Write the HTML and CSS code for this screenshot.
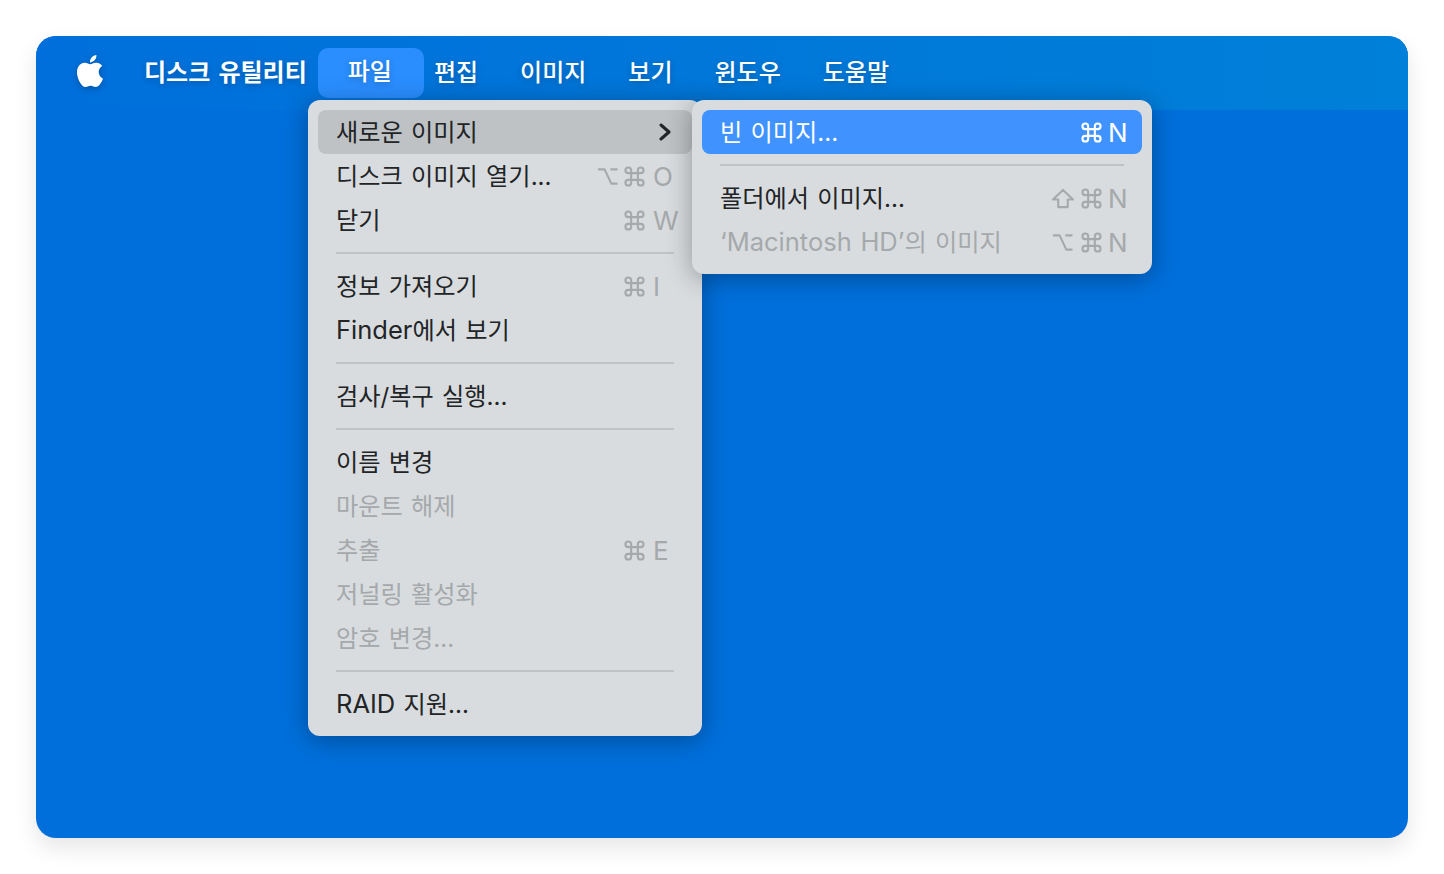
FILE: index.html
```html
<!DOCTYPE html>
<html lang="ko">
<head>
<meta charset="utf-8">
<title>디스크 유틸리티</title>
<link rel="stylesheet" href="styles.css">
</head>
<body>
<svg class="sprite" aria-hidden="true">
  <symbol id="cmd" viewBox="0 0 22 22"><path d="M7.5 7.5H14.5V14.5H7.5Z M7.5 7.5H4.5A3 3 0 1 1 7.5 4.5V17.5A3 3 0 1 1 4.5 14.5H17.5A3 3 0 1 1 14.5 17.5V4.5A3 3 0 1 1 17.5 7.5H7.5"/></symbol>
  <symbol id="opt" viewBox="0 0 22 22"><path d="M1 3.5H8L15 18.5H21.5M14 3.5H21.5"/></symbol>
  <symbol id="shift" viewBox="0 0 24 22"><path d="M12 2L22.5 12H17V20H7V12H1.5Z"/></symbol>
</svg>
<div class="window">
  <header class="menubar">
    <svg class="apple" viewBox="0 0 24 24"><path d="M12.152 6.896c-.948 0-2.415-1.078-3.96-1.04-2.04.027-3.91 1.183-4.961 3.014-2.117 3.675-.546 9.103 1.519 12.09 1.013 1.454 2.208 3.09 3.792 3.039 1.52-.065 2.09-.987 3.935-.987 1.831 0 2.35.987 3.96.948 1.637-.026 2.676-1.48 3.676-2.948 1.156-1.688 1.636-3.325 1.662-3.415-.039-.013-3.182-1.221-3.22-4.857-.026-3.04 2.48-4.494 2.597-4.559-1.429-2.09-3.623-2.324-4.39-2.376-2-.156-3.675 1.09-4.61 1.09zM15.53 3.83c.843-1.012 1.4-2.427 1.245-3.83-1.207.052-2.662.805-3.532 1.818-.78.896-1.454 2.338-1.273 3.714 1.338.104 2.715-.688 3.559-1.701"/></svg>
    <span class="app-name">디스크 유틸리티</span>
    <span class="bar-item active">파일</span>
    <span class="bar-item">편집</span>
    <span class="bar-item">이미지</span>
    <span class="bar-item">보기</span>
    <span class="bar-item">윈도우</span>
    <span class="bar-item">도움말</span>
  </header>

  <div class="menu menu-file">
    <div class="row hover"><span class="label">새로운 이미지</span>
      <svg class="chevron" viewBox="0 0 12 18"><path d="M2 2l8 7-8 7"/></svg></div>
    <div class="row"><span class="label">디스크 이미지 열기...</span><span class="keys dim"><svg class="mod"><use href="#opt"/></svg><svg class="mod"><use href="#cmd"/></svg><b>O</b></span></div>
    <div class="row"><span class="label">닫기</span><span class="keys dim"><i></i><svg class="mod"><use href="#cmd"/></svg><b>W</b></span></div>
    <hr>
    <div class="row"><span class="label">정보 가져오기</span><span class="keys dim"><i></i><svg class="mod"><use href="#cmd"/></svg><b>I</b></span></div>
    <div class="row"><span class="label"><span class="latin">Finder</span>에서 보기</span></div>
    <hr>
    <div class="row"><span class="label">검사/복구 실행...</span></div>
    <hr>
    <div class="row"><span class="label">이름 변경</span></div>
    <div class="row off"><span class="label">마운트 해제</span></div>
    <div class="row off"><span class="label">추출</span><span class="keys"><i></i><svg class="mod"><use href="#cmd"/></svg><b>E</b></span></div>
    <div class="row off"><span class="label">저널링 활성화</span></div>
    <div class="row off"><span class="label">암호 변경...</span></div>
    <hr>
    <div class="row"><span class="label"><span class="latin">RAID</span> 지원...</span></div>
  </div>

  <div class="menu menu-sub">
    <div class="row selected"><span class="label">빈 이미지...</span><span class="keys"><i></i><svg class="mod"><use href="#cmd"/></svg><b>N</b></span></div>
    <hr>
    <div class="row"><span class="label">폴더에서 이미지...</span><span class="keys dim"><svg class="mod wide"><use href="#shift"/></svg><svg class="mod"><use href="#cmd"/></svg><b>N</b></span></div>
    <div class="row off"><span class="label"><span class="latin">‘Macintosh HD’</span>의 이미지</span><span class="keys"><svg class="mod"><use href="#opt"/></svg><svg class="mod"><use href="#cmd"/></svg><b>N</b></span></div>
  </div>
</div>
</body>
</html>
```
FILE: styles.css
```css
* { box-sizing: border-box; }
html, body { margin: 0; background: #fff; }
body {
  width: 1444px;
  height: 874px;
  padding: 36px;
  overflow: hidden;
  font-family: "Inter", "Noto Sans CJK KR", sans-serif;
  font-size: 24px;
}
.sprite { display: none; }
.window {
  position: relative;
  width: 1372px;
  height: 802px;
  background: #006fdb;
  border-radius: 20px;
  box-shadow: 0 10px 22px rgba(0, 0, 0, .1);
}
.menubar {
  display: flex;
  align-items: center;
  height: 74px;
  padding: 0 0 0 38px;
  border-radius: 20px 20px 0 0;
  background: linear-gradient(90deg, #006fdb 0%, #0080d8 100%);
  color: #fff;
  text-shadow: 0 2px 6px rgba(0, 0, 0, .22);
  word-spacing: 2.5px;
}
.apple {
  width: 32px;
  height: 32px;
  margin: 0 38px 4px 0;
  fill: #fff;
  filter: drop-shadow(0 2px 3px rgba(0, 0, 0, .25));
}
.app-name { font-weight: 700; margin: 0 11px 6px 0; white-space: nowrap; }
.bar-item { margin: 0 42px 6px 0; white-space: nowrap; font-weight: 500; }
.bar-item.active {
  height: 50px;
  line-height: 48px;
  padding: 0 32px 0 30px;
  margin: 0 10px 0 0;
  border-radius: 10px;
  background: #2a8eff;
}
.menu {
  position: absolute;
  top: 64px;
  padding: 10px;
  background: #d8dcdf;
  border-radius: 12px;
  color: #222426;
  box-shadow: 0 4px 26px rgba(0, 0, 0, .32);
}
.menu-file { left: 272px; width: 394px; }
.menu-sub { left: 656px; width: 460px; }
.row {
  display: flex;
  align-items: center;
  justify-content: space-between;
  height: 44px;
  padding-left: 18px;
  border-radius: 8px;
  white-space: nowrap;
}
.label {
  margin-bottom: 4px;
  font-size: 24.2px;
  word-spacing: 1.5px;
}
.latin { font-size: 25.5px; }
.row.hover { background: #bec2c5; }
.row.selected { background: #4092ff; color: #fff; }
.row.off, .keys.dim { color: #a5a9ab; }
.menu hr {
  height: 2px;
  margin: 10px 18px;
  border: 0;
  background: #bfc3c6;
}
.keys {
  display: grid;
  grid-template-columns: 26px 30px 39px;
  align-items: center;
  font-size: 26px;
}
.menu-sub .keys { grid-template-columns: 28px 28px 34px; }
.mod {
  width: 21px;
  height: 21px;
  fill: none;
  stroke: currentColor;
  stroke-width: 2.2;
  stroke-linejoin: round;
}
.keys .mod:nth-child(2) { margin-left: 1px; }
.mod.wide { width: 24px; margin-left: -1px; }
.keys b { font-weight: 400; }
.chevron {
  width: 12px;
  height: 18px;
  margin-right: 21px;
  fill: none;
  stroke: #222426;
  stroke-width: 3;
  stroke-linecap: round;
  stroke-linejoin: round;
}
```
